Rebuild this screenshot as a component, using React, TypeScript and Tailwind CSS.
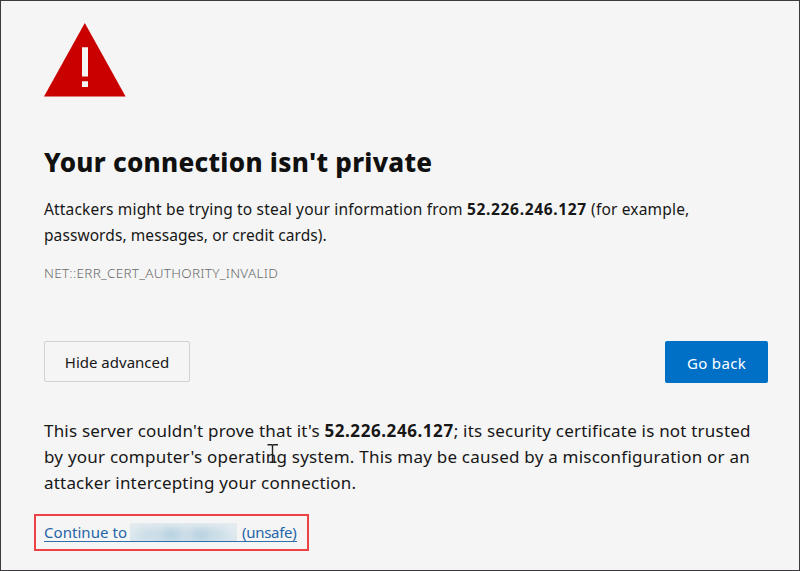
import type { ReactNode } from "react";

function WarningIcon() {
  return (
    <svg className="block h-[74px] w-[82px]" viewBox="0 0 82 74" aria-hidden="true">
      <path d="M40.8 0 81.6 73.5H0Z" fill="#ca0000" />
      <path d="M38 24.3h6V53.5h-6ZM38 58.3h6V64h-6Z" fill="#f5f5f5" />
    </svg>
  );
}

function Line({ className, children }: { className: string; children: ReactNode }) {
  return <span className={`block whitespace-nowrap ${className}`}>{children}</span>;
}

function TextCursor() {
  return (
    <svg className="absolute left-[266px] top-[442px] h-[21px] w-[12px]" viewBox="0 0 12 21" fill="none" stroke="#222" strokeWidth="1.4" aria-hidden="true">
      <path d="M.5 1.7h4q1 0 1 1 0-1 1-1h4.5M5.5 2v17M2.5 19.3h2q1 0 1-1 0 1 1 1h3" />
    </svg>
  );
}

function RedactedHost() {
  return (
    <span className="relative h-[18px] w-[107px] overflow-hidden bg-linear-to-b from-[#e6edf0] to-[#dbe7ed]">
      <span className="absolute left-[8px] top-[7px] h-[9px] w-[88px] bg-[#bdd5e3] blur-[6px]" />
      <span className="absolute left-[34px] top-[8px] h-[8px] w-[14px] bg-[#b0cddf] blur-[4px]" />
      <span className="absolute left-[64px] top-[8px] h-[8px] w-[14px] bg-[#b0cddf] blur-[4px]" />
    </span>
  );
}

export default function App() {
  return (
    <main className="relative flex h-[571px] w-[800px] flex-col overflow-hidden border border-[#3c3a3c] bg-[#f5f5f5] pl-[43px] pt-[22px] font-['Noto_Sans',sans-serif] text-[#171717]">
      <WarningIcon />
      <h1 className="mt-[49px] h-8 whitespace-nowrap text-[26px] font-extrabold leading-8 tracking-[0.28px] text-[#101010]">Your connection isn't private</h1>
      <p className="mt-[18px] text-[15.5px] leading-[26px]">
        <Line className="tracking-[0.17px]">
          Attackers might be trying to steal your information from <strong className="tracking-[0.67px]">52.226.246.127</strong> (for example,
        </Line>
        <Line className="tracking-[0.08px]">passwords, messages, or credit cards).</Line>
      </p>
      <p className="mt-[15px] h-5 whitespace-nowrap text-[13.5px] font-light leading-5 tracking-[0.29px] text-[#6b6b6b]">NET::ERR_CERT_AUTHORITY_INVALID</p>
      <div className="mt-[58px] flex h-[42px] w-[724px] items-start justify-between">
        <button className="h-[41px] w-[146px] rounded-[2px] border border-[#d2d2d2] pt-[2px] text-[15px]">Hide advanced</button>
        <button className="h-[42px] w-[103px] rounded-[2px] bg-[#0070c6] pt-[3px] text-[15px] tracking-[0.35px] text-white">Go back</button>
      </div>
      <p className="mt-[35px] text-[17px] leading-[26px]">
        <Line className="tracking-[0.2px]">
          This server couldn't prove that it's <strong className="tracking-[0.57px]">52.226.246.127</strong>; its security certificate is not trusted
        </Line>
        <Line className="tracking-[0.23px]">by your computer's operating system. This may be caused by a misconfiguration or an</Line>
        <Line className="tracking-[0.19px]">attacker intercepting your connection.</Line>
      </p>
      <div className="-ml-[10px] mt-[18px] flex h-[37px] w-[275px] shrink-0 items-start border-2 border-[#ec4245] pl-2 pt-[6px]">
        <a className="flex h-[20px] w-[253px] items-center whitespace-nowrap border-b border-[#2f6fae] pt-px text-[15px] text-[#1f65a8]">
          <span className="w-[86px] tracking-[0.05px]">Continue to</span>
          <RedactedHost />
          <span className="ml-[5px] tracking-[-0.3px]">(unsafe)</span>
        </a>
      </div>
      <TextCursor />
    </main>
  );
}
